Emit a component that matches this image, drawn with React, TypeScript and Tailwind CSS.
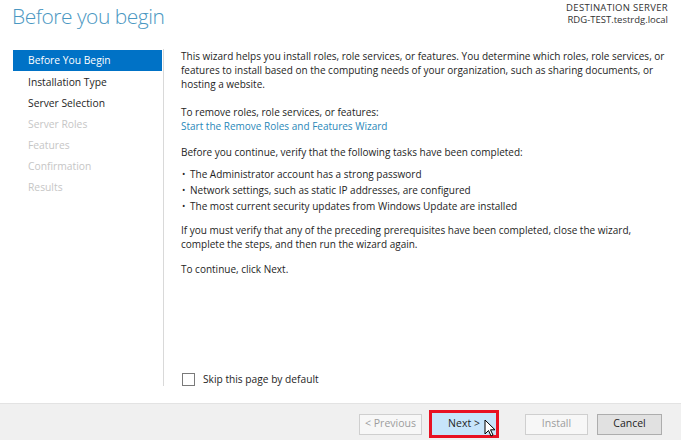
import React from 'react';

const steps = [
  { label: 'Before You Begin', state: 'active' },
  { label: 'Installation Type', state: 'on' },
  { label: 'Server Selection', state: 'on' },
  { label: 'Server Roles', state: 'off' },
  { label: 'Features', state: 'off' },
  { label: 'Confirmation', state: 'off' },
  { label: 'Results', state: 'off' },
];

const bullets = [
  'The Administrator account has a strong password',
  'Network settings, such as static IP addresses, are configured',
  'The most current security updates from Windows Update are installed',
];

export default function App() {
  return (
    <div className="w-[681px] h-[440px] bg-white flex flex-col overflow-hidden text-[#1e1e1e] font-['Open_Sans','Noto_Sans',sans-serif]">
      {/* Header */}
      <div className="h-[49px] shrink-0 flex justify-between items-start pl-[12px] pr-[13px]">
        <h1 className="text-[21px] font-light leading-none mt-[6px] text-[#4a97c2] tracking-[-0.5px]">Before you begin</h1>
        <div className="text-right text-[9.5px] leading-[12px] mt-[2px] text-[#333]">
          <div className="tracking-[0.3px]">DESTINATION SERVER</div>
          <div>RDG-TEST.testrdg.local</div>
        </div>
      </div>

      {/* Body */}
      <div className="flex-1 flex pb-[17px] min-h-0">
        <div className="w-[164px] shrink-0 pl-[13px] pt-[1px] border-r border-[#d9d9d9]">
          {steps.map(s => (
            <div
              key={s.label}
              className={`h-[21px] pl-[15px] flex items-center text-[10.3px] ${
                s.state === 'active'
                  ? 'bg-[#0072c6] text-white h-[20px] mb-[1px] mr-[1px]'
                  : s.state === 'on'
                  ? 'text-[#1e1e1e]'
                  : 'text-[#c6c6c6]'
              }`}
            >
              {s.label}
            </div>
          ))}
        </div>

        <div className="flex-1 flex flex-col pl-[17px] pr-[8px] text-[10px] leading-[14px] whitespace-nowrap">
          <p>
            This wizard helps you install roles, role services, or features. You determine which roles, role services, or
            <br />
            features to install based on the computing needs of your organization, such as sharing documents, or
            <br />
            hosting a website.
          </p>
          <p className="mt-[14px]">To remove roles, role services, or features:</p>
          <p className="text-[#2a88b9]">Start the Remove Roles and Features Wizard</p>
          <p className="mt-[12px]">Before you continue, verify that the following tasks have been completed:</p>
          <ul className="mt-[7px]">
            {bullets.map(b => (
              <li key={b} className="h-[16px] flex items-center">
                <span className="w-[9px] pl-[1px] text-[9px] leading-none -mt-[2px]">•</span>
                <span>{b}</span>
              </li>
            ))}
          </ul>
          <p className="mt-[9px]">
            If you must verify that any of the preceding prerequisites have been completed, close the wizard,
            <br />
            complete the steps, and then run the wizard again.
          </p>
          <p className="mt-[11px]">To continue, click Next.</p>

          <label className="mt-auto flex items-center gap-[8px] pl-[1px]">
            <span className="w-[13px] h-[13px] border border-[#7a7a7a] bg-white" />
            <span className="text-[10.2px]">Skip this page by default</span>
          </label>
        </div>
      </div>

      {/* Footer */}
      <div className="h-[37px] shrink-0 bg-[#f0f0f0] border-t border-[#e3e3e3] flex items-center justify-end pt-[4px] pr-[19px] text-[10.5px]">
        <button className="w-[63px] h-[21px] border border-[#cfcfcf] bg-[#f7f7f7] text-[#9d9d9d]">&lt; Previous</button>
        <div className="relative ml-[7px]">
          <button className="w-[70px] h-[28px] border-[3px] border-[#e81123] bg-[#c7e5fb] text-[#1e1e1e]">Next &gt;</button>
          <svg className="absolute left-[55px] top-[9px]" width="12" height="19" viewBox="0 0 12 19">
            <path d="M1 1 L1 15 L4.5 11.5 L7 17 L9 16 L6.5 10.8 L11 10.8 Z" fill="#fff" stroke="#000" strokeWidth="1" strokeLinejoin="round" />
          </svg>
        </div>
        <button className="ml-[26px] w-[63px] h-[21px] border border-[#cfcfcf] bg-[#f7f7f7] text-[#9d9d9d]">Install</button>
        <button className="ml-[9px] w-[65px] h-[21px] border border-[#adadad] bg-[#e1e1e1] text-[#1e1e1e]">Cancel</button>
      </div>
    </div>
  );
}
